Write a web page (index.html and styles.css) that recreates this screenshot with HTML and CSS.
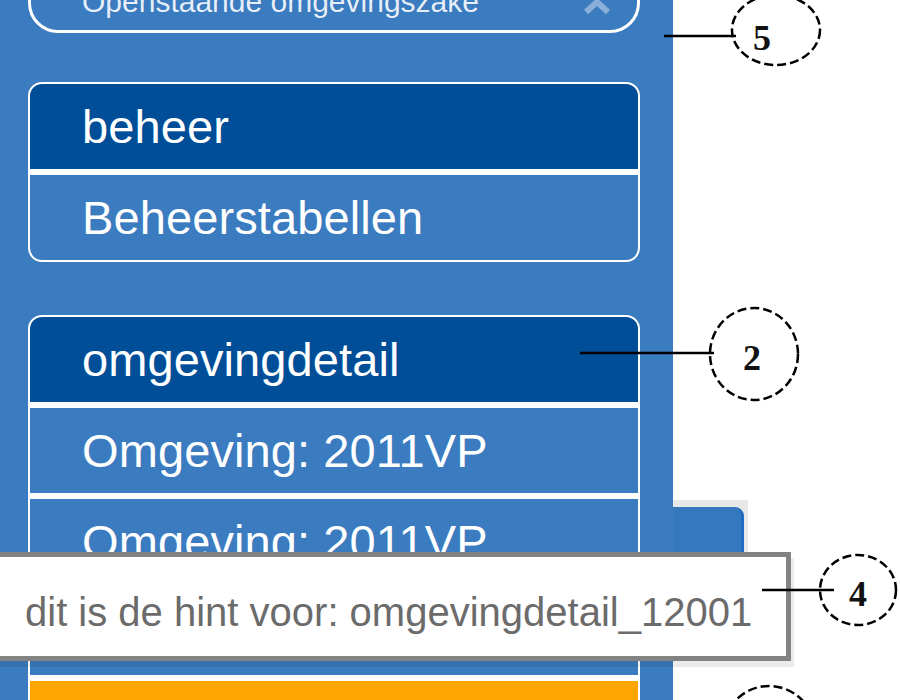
FILE: index.html
```html
<!DOCTYPE html>
<html lang="nl">
<head>
    <meta charset="UTF-8">
    <meta name="viewport" content="width=device-width, initial-scale=1.0">
    <title>Omgevingdetail</title>
    <link rel="stylesheet" href="styles.css">
</head>
<body>
<div class="page">
    <aside class="sidebar">
        <div class="open-cases">
            <span>Openstaande omgevingszake</span>
            <svg class="chevron" width="32" height="20" viewBox="0 0 32 20">
                <polyline points="5,16 16,6 27,16" fill="none" stroke="#ffffff" stroke-opacity="0.4" stroke-width="6"/>
            </svg>
        </div>

        <div class="menu-group first">
            <div class="menu-head">beheer</div>
            <div class="menu-item">Beheerstabellen</div>
        </div>

        <div class="menu-group">
            <div class="menu-head">omgevingdetail</div>
            <div class="menu-item">Omgeving: 2011VP</div>
            <div class="menu-item">Omgeving: 2011VP</div>
            <div class="menu-item">Omgeving: 2011VP</div>
            <div class="menu-item menu-item-new"></div>
        </div>
    </aside>

    <main class="content">
        <div class="tab-strip">
            <div class="tab"></div>
        </div>
    </main>
</div>

<div class="hint">dit is de hint voor: omgevingdetail_12001</div>

<!-- numbered callouts -->
<svg class="callouts" width="900" height="700" viewBox="0 0 900 700">
    <g fill="none" stroke="#000" stroke-width="2.5">
        <line x1="664" y1="36" x2="736" y2="36"/>
        <ellipse cx="776" cy="30" rx="44" ry="35" stroke-dasharray="9 4"/>

        <line x1="580" y1="353" x2="714" y2="353"/>
        <ellipse cx="754" cy="354" rx="44" ry="46" stroke-dasharray="9 4"/>

        <line x1="762" y1="590" x2="834" y2="590"/>
        <ellipse cx="858" cy="590" rx="38" ry="35" stroke-dasharray="9 4"/>

        <ellipse cx="769" cy="732" rx="46" ry="46" stroke-dasharray="9 4"/>
    </g>
    <g class="callout-num">
        <text x="762" y="50">5</text>
        <text x="752" y="370">2</text>
        <text x="858" y="606">4</text>
    </g>
</svg>
</body>
</html>
```

FILE: styles.css
```css
body {
    margin: 0;
    width: 900px;
    height: 700px;
    overflow: hidden;
    position: relative;
    background-color: #fff;
    font-family: "Liberation Sans", Arial, sans-serif;
}

.page {
    display: flex;
    height: 700px;
}

.sidebar {
    width: 673px;
    flex-shrink: 0;
    box-sizing: border-box;
    padding: 0 33px 0 28px;
    background-color: #3b7bbf;
    overflow: hidden;
}

.open-cases {
    margin-top: -30px;
    height: 63px;
    box-sizing: border-box;
    display: flex;
    align-items: center;
    justify-content: space-between;
    padding: 0 24px 0 51px;
    border: 3px solid #fff;
    border-radius: 30px;
    color: rgba(255, 255, 255, 0.88);
    font-size: 30px;
}

.chevron {
    margin-top: 8px;
}

.menu-group {
    margin-top: 53px;
    display: flex;
    flex-direction: column;
    gap: 6px;
    border: 2px solid #fff;
    border-radius: 14px;
    background-color: #fff;
    overflow: hidden;
}

.menu-group.first {
    margin-top: 49px;
}

.menu-head,
.menu-item {
    height: 85px;
    flex-shrink: 0;
    display: flex;
    align-items: center;
    padding-left: 52px;
    color: #fff;
    font-size: 47px;
    letter-spacing: 0.1px;
}

.menu-head {
    background-color: #004e98;
}

.menu-item {
    background-color: #3b7bbf;
}

.menu-item-new {
    background-color: #ffa500;
}

.content {
    flex: 1;
    padding-top: 500px;
}

.tab-strip {
    width: 75px;
    height: 52px;
    box-sizing: border-box;
    padding-top: 7px;
    background-color: #e8e8e8;
}

.tab {
    width: 71px;
    height: 45px;
    box-sizing: border-box;
    background-color: #3478be;
    border-right: 3px solid #1f6cc2;
    border-top-right-radius: 9px;
}

.hint {
    position: absolute;
    left: -20px;
    top: 552px;
    width: 811px;
    height: 109px;
    box-sizing: border-box;
    display: flex;
    align-items: center;
    padding: 12px 0 0 40px;
    border: 5px solid #838383;
    background-color: #fff;
    color: #6b6b6b;
    font-size: 40px;
    white-space: nowrap;
    box-shadow: 3px 6px 0 rgba(0, 0, 0, 0.08);
}

.callouts {
    position: absolute;
    left: 0;
    top: 0;
    pointer-events: none;
}

.callout-num text {
    font-family: "Liberation Serif", "Times New Roman", serif;
    font-weight: bold;
    font-size: 36px;
    fill: #111;
    text-anchor: middle;
}
```
